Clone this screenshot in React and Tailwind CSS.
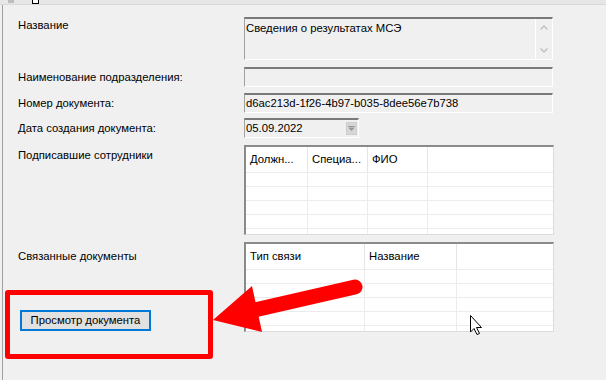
import React from "react";

// sunken WinForms-style edit box
function Field({ className = "", children }) {
  return (
    <div className={`border-t-2 border-l border-t-[#7a7a7a] border-l-[#a0a0a0] border-r border-b border-r-white border-b-white bg-[#f0f0f0] ${className}`}>
      {children}
    </div>
  );
}

function Grid({ cols, widths }) {
  const rows = [0, 1, 2, 3, 4];
  return (
    <div className="w-[310px] h-[90px] bg-white border-t-2 border-l-2 border-t-[#8a8a8a] border-l-[#8a8a8a] border-r border-b border-r-[#dcdcdc] border-b-[#dcdcdc] overflow-hidden">
      <div className="flex h-[25px]">
        {widths.map((w, i) => (
          <div key={i} style={{ width: w }} className="shrink-0 border-r border-[#e5e5e5] pl-[4px] pt-[6px] leading-[13px] text-black">
            {cols[i]}
          </div>
        ))}
        <div className="flex-1" />
      </div>
      {rows.map((r) => (
        <div key={r} className="flex h-[14px] border-t border-[#ececec]">
          {widths.map((w, i) => (
            <div key={i} style={{ width: w }} className="shrink-0 border-r border-[#ececec]" />
          ))}
          <div className="flex-1" />
        </div>
      ))}
    </div>
  );
}

export default function App() {
  return (
    <div className="relative w-[606px] h-[380px] bg-[#f0f0f0] overflow-hidden text-black" style={{ fontFamily: '"Liberation Sans", Arial, sans-serif' }}>
      {/* top strip of the window */}
      <div className="h-[5px] bg-[#e6e6e6] border-b border-[#dadada] relative">
        <div className="absolute left-[8px] top-0 w-[6px] h-[3px] bg-[#bdbdbd]" />
        <div className="absolute left-[32px] top-0 w-[7px] h-[4px] border-l border-r border-b border-black bg-white" />
      </div>

      <div className="absolute left-[2px] top-[5px] bottom-0 w-px bg-[#a0a0a0]" />

      <div className="pl-[18px] pt-[12px] flex flex-col text-[11.3px] leading-[13px]">
        <div className="flex">
          <div className="w-[226px] pt-[2px]">Название</div>
          <Field className="w-[309px] h-[43px] flex">
            <div className="flex-1 pl-[1px] pt-[3px]">Сведения о результатах МСЭ</div>
            <div className="w-[17px] border-l border-white flex flex-col items-center justify-between py-[6px]">
              <svg width="8" height="5" viewBox="0 0 8 5"><path d="M0.5 4.5 L4 1 L7.5 4.5" fill="none" stroke="#c2c2c2" strokeWidth="1.5" /></svg>
              <svg width="8" height="5" viewBox="0 0 8 5"><path d="M0.5 0.5 L4 4 L7.5 0.5" fill="none" stroke="#c2c2c2" strokeWidth="1.5" /></svg>
            </div>
          </Field>
        </div>

        <div className="flex items-center mt-[7px]">
          <div className="w-[226px]">Наименование подразделения:</div>
          <Field className="w-[309px] h-[20px]" />
        </div>

        <div className="flex items-center mt-[6px]">
          <div className="w-[226px]">Номер документа:</div>
          <Field className="w-[309px] h-[20px] pl-[1px] pt-[2px]">d6ac213d-1f26-4b97-b035-8dee56e7b738</Field>
        </div>

        <div className="flex items-center mt-[5px]">
          <div className="w-[226px]">Дата создания документа:</div>
          <Field className="w-[115px] h-[20px] flex items-center">
            <div className="flex-1 pl-[1px]">05.09.2022</div>
            <div className="w-[11px] h-[13px] mr-[1px] bg-[#d6d6d6] border border-[#cfcfcf] flex items-center justify-center">
              <svg width="7" height="5" viewBox="0 0 7 5"><path d="M0 0.5 H7 M1 2 L3.5 4.5 L6 2 Z" stroke="#9a9a9a" fill="#9a9a9a" strokeWidth="1" /></svg>
            </div>
          </Field>
        </div>

        <div className="flex mt-[7px]">
          <div className="w-[226px] pt-[4px]">Подписавшие сотрудники</div>
          <Grid cols={["Должн...", "Специа...", "ФИО"]} widths={[62, 60, 60]} />
        </div>

        <div className="flex mt-[7px]">
          <div className="w-[226px] flex flex-col">
            <div className="pt-[8px]">Связанные документы</div>
            <button className="mt-auto mb-[1px] ml-[2px] w-[131px] h-[21px] bg-[#e1e1e1] border-2 border-[#0078d7] text-[11.3px] leading-[13px] text-black">
              Просмотр документа
            </button>
          </div>
          <Grid cols={["Тип связи", "Название"]} widths={[119, 92]} />
        </div>
      </div>

      {/* red highlight frame */}
      <div className="absolute left-[5px] top-[290px] w-[208px] h-[69px] border-[5px] border-[#ff0000] rounded-[3px]" />

      {/* red arrow + mouse pointer */}
      <svg className="absolute left-0 top-0" width="606" height="380" viewBox="0 0 606 380">
        <line x1="355" y1="287" x2="250" y2="311" stroke="#ff0000" strokeWidth="15" strokeLinecap="round" />
        <polygon points="213,320 252,286 262,332" fill="#ff0000" />
        <path d="M470.5 315.5 V332 L474 328.5 L477 334.5 L479.5 333.5 L476.5 327.5 L481.5 327.5 Z" fill="#fff" stroke="#000" strokeWidth="1" strokeLinejoin="round" />
      </svg>
    </div>
  );
}
